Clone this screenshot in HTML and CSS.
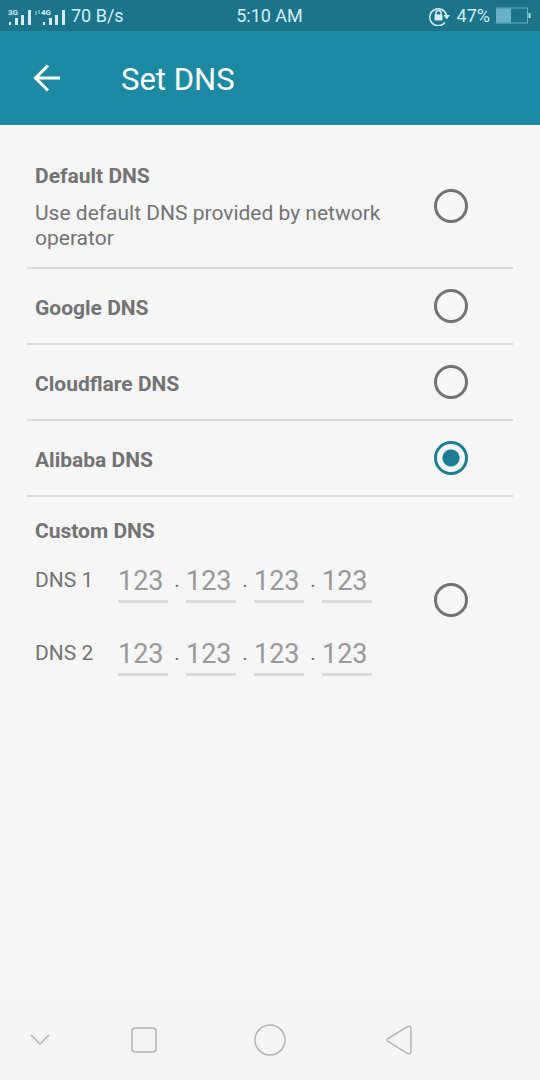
FILE: index.html
```html
<!DOCTYPE html>
<html lang="en">
<head>
    <meta charset="UTF-8">
    <meta name="viewport" content="width=device-width, initial-scale=1.0">
    <title>Set DNS</title>
    <link rel="stylesheet" href="styles.css">
</head>
<body>
    <div class="status-bar">
        <div class="status-left">
            <svg class="signal" width="57" height="20" viewBox="0 0 57 20" fill="currentColor">
                <text x="0" y="9">3G</text>
                <text x="33" y="9">4G</text>
                <path d="M1 16h2v3H1zM7 12h3v7H7zM13 9h3v10h-3zM20 4h3v15h-3z"/>
                <path d="M35 16h2v3h-2zM41 12h3v7h-3zM47 9h3v10h-3zM54 4h3v15h-3z"/>
                <path d="M27 5h2v4h-2zM30 4h2v4h-2z" opacity=".4"/>
            </svg>
            <span>70 B/s</span>
        </div>
        <span>5:10 AM</span>
        <div class="status-right">
            <svg width="22" height="20" viewBox="0 0 22 20" fill="none" stroke="currentColor">
                <path d="M16 16.500A8.500 8.500 0 1 1 17.500 9" stroke-width="1.500"/>
                <path d="M14.500 9h6.500l-3.200 4.500z" fill="currentColor" stroke="none"/>
                <rect x="5.500" y="8.500" width="8" height="6" rx="1" fill="currentColor" stroke="none"/>
                <path d="M7 9V7a2.500 2.500 0 0 1 5 0v2" stroke-width="1.500"/>
            </svg>
            <span>47%</span>
            <svg width="35" height="18" viewBox="0 0 35 18">
                <rect x=".5" y="1" width="31" height="15" fill="none" stroke="#68b1c8"/>
                <rect x="1" y="1.500" width="14" height="14" fill="#68b1c8"/>
                <path d="M32.500 6h2v5h-2z" fill="#b5e0ea"/>
            </svg>
        </div>
    </div>
    <header class="header">
        <button type="button" class="back" aria-label="Back">
            <svg width="28" height="28" viewBox="0 0 28 28" fill="none" stroke="currentColor" stroke-width="3">
                <path d="M15 1.500L2.500 14 15 26.500M2.500 14H27"/>
            </svg>
        </button>
        <h1>Set DNS</h1>
    </header>
    <main class="options">
        <label class="option">
            <span class="text">
                <span class="name">Default DNS</span>
                <span class="desc">Use default DNS provided by network operator</span>
            </span>
            <input type="radio" name="dns">
        </label>
        <label class="option">
            <span class="text name">Google DNS</span>
            <input type="radio" name="dns">
        </label>
        <label class="option">
            <span class="text name">Cloudflare DNS</span>
            <input type="radio" name="dns">
        </label>
        <label class="option">
            <span class="text name">Alibaba DNS</span>
            <input type="radio" name="dns" checked>
        </label>
        <div class="option custom">
            <div class="text">
                <label class="name" for="custom">Custom DNS</label>
                <div class="address" role="group" aria-labelledby="dns1">
                    <span class="address-label" id="dns1">DNS 1</span>
                    <input type="text" placeholder="123" maxlength="3" aria-label="DNS 1 part 1"><span class="dot">.</span>
                    <input type="text" placeholder="123" maxlength="3" aria-label="DNS 1 part 2"><span class="dot">.</span>
                    <input type="text" placeholder="123" maxlength="3" aria-label="DNS 1 part 3"><span class="dot">.</span>
                    <input type="text" placeholder="123" maxlength="3" aria-label="DNS 1 part 4">
                </div>
                <div class="address" role="group" aria-labelledby="dns2">
                    <span class="address-label" id="dns2">DNS 2</span>
                    <input type="text" placeholder="123" maxlength="3" aria-label="DNS 2 part 1"><span class="dot">.</span>
                    <input type="text" placeholder="123" maxlength="3" aria-label="DNS 2 part 2"><span class="dot">.</span>
                    <input type="text" placeholder="123" maxlength="3" aria-label="DNS 2 part 3"><span class="dot">.</span>
                    <input type="text" placeholder="123" maxlength="3" aria-label="DNS 2 part 4">
                </div>
            </div>
            <input type="radio" name="dns" id="custom">
        </div>
    </main>
    <nav class="nav-bar">
        <button type="button" aria-label="Hide">
            <svg width="20" height="12" viewBox="0 0 20 12"><path d="M1 1l9 9 9-9"/></svg>
        </button>
        <button type="button" aria-label="Recent apps">
            <svg width="26" height="26" viewBox="0 0 26 26"><rect x="1" y="1" width="24" height="24" rx="3"/></svg>
        </button>
        <button type="button" aria-label="Home">
            <svg width="32" height="32" viewBox="0 0 32 32"><circle cx="16" cy="16" r="15"/></svg>
        </button>
        <button type="button" aria-label="Back">
            <svg width="26" height="30" viewBox="0 0 26 30"><path d="M2 13.500L21 1.800Q25 0 25 4v22q0 4-4 2.200L2 16.500q-2-1.500 0-3z"/></svg>
        </button>
    </nav>
</body>
</html>
```

FILE: styles.css
```css
* {
    margin: 0;
    padding: 0;
    box-sizing: border-box;
    font-family: Roboto, sans-serif;
}
body {
    min-height: 100vh;
    display: flex;
    flex-direction: column;
    background: #f6f6f6;
    color: #737373;
    font-size: 21px;
    line-height: 25px;
}
svg {
    display: block;
    flex-shrink: 0;
}
button {
    border: 0;
    background: none;
    color: inherit;
    cursor: pointer;
}

/* status bar */
.status-bar {
    display: grid;
    grid-template-columns: 1fr auto 1fr;
    align-items: center;
    height: 31px;
    padding: 0 9px 0 8px;
    background: #1c748a;
    color: #d3eff5;
    font-size: 18px;
}
.status-left, .status-right {
    display: flex;
    align-items: center;
    gap: 6px;
}
.status-right {
    justify-content: flex-end;
}
.signal text {
    font-size: 8px;
    font-weight: 700;
}

/* header */
.header {
    display: flex;
    align-items: center;
    height: 94px;
    padding: 0 33px;
    gap: 60px;
    background: #1d8aa4;
    color: #fff;
}
.header h1 {
    padding-top: 4px;
    font-size: 31px;
    font-weight: 400;
    line-height: 36px;
}

/* dns list */
.options {
    flex: 1;
    padding: 19px 27px;
}
.option {
    display: flex;
    align-items: center;
    justify-content: space-between;
    min-height: 76px;
    padding: 16px 45px 16px 8px;
    gap: 32px;
    border-bottom: 2px solid #dadcdc;
}
.text {
    padding-top: 4px;
}
.name {
    display: block;
    font-weight: 700;
}
.desc {
    display: block;
    margin-top: 12px;
}
.option input[type="radio"] {
    appearance: none;
    flex-shrink: 0;
    width: 34px;
    height: 34px;
    border: 3px solid #737373;
    border-radius: 50%;
}
.option input[type="radio"]:checked {
    border-color: #1c7e95;
    background: radial-gradient(circle, #1c7e95 8px, transparent 9px);
}
.custom {
    padding-top: 18px;
    border-bottom: 0;
}
.custom .text {
    padding-bottom: 8px;
}
.address {
    display: flex;
    align-items: center;
    margin-top: 32px;
}
.name + .address {
    margin-top: 18px;
}
.address-label {
    width: 83px;
    padding-bottom: 4px;
}
.address input {
    width: 50px;
    height: 41px;
    border: 0;
    border-bottom: 3px solid #dadcdc;
    outline: 0;
    background: none;
    color: #737373;
    font-size: 27px;
}
.address input::placeholder {
    color: #999;
}
.dot {
    width: 18px;
    padding-bottom: 4px;
    text-align: center;
}

/* navigation bar */
.nav-bar {
    display: grid;
    grid-template-columns: 80fr 128fr 124fr 134fr 74fr;
    height: 81px;
    background: #f5f5f5;
}
.nav-bar button {
    display: flex;
    align-items: center;
    justify-content: center;
}
.nav-bar svg {
    fill: none;
    stroke: #b4b4b4;
    stroke-width: 1.5;
}
```
